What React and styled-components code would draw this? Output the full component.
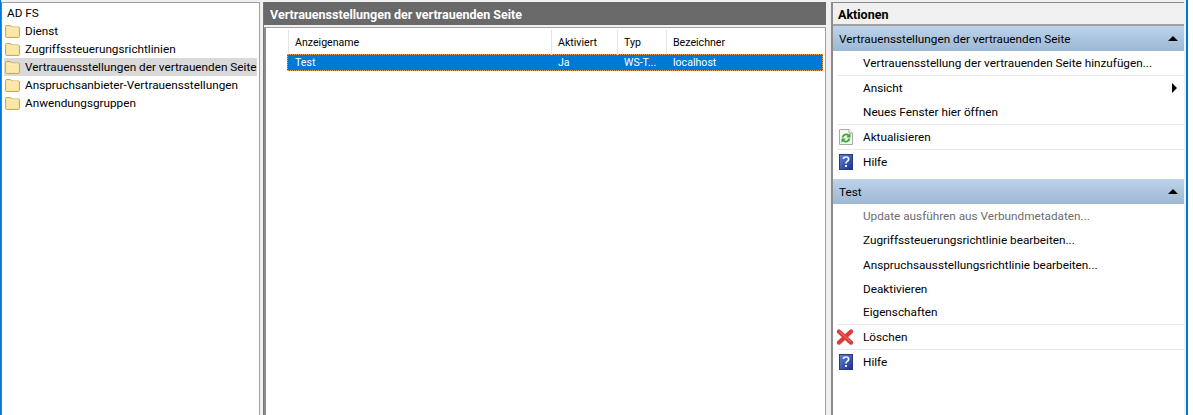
import React from 'react';
import styled, { createGlobalStyle } from 'styled-components';

const Global = createGlobalStyle`
  html, body { margin: 0; padding: 0; background: #fff; }
  body { font-family: Roboto, "Open Sans", sans-serif; font-size: 11.75px; color: #000; overflow: hidden; }
`;
const Window = styled.div`
  width: 1193px; height: 415px; display: flex; background: #fff; overflow: hidden;
`;
const Frame = styled.div`
  width: 1188px; height: 415px; display: flex; flex: none; box-sizing: border-box;
  padding-top: 2px; background: #f0f0f0; border-left: 1px solid #0078d7; border-right: 2px solid #0078d7;
`;
const Pane = styled.section`
  box-sizing: border-box; height: 413px; flex: none; background: #fff;
  border-top: 2px solid #8a8a8a; border-left: 1px solid #777;
`;
const TreePane = styled(Pane)`
  width: 259px; border-right: 1px solid #a0a0a0; padding: 1px 0 0 1px; border-top-width: 1px;
  border-top-color: #a0a0a0;
`;
const TreeRoot = styled.div`
  height: 18px; line-height: 18px; padding-left: 4px;
`;
const TreeRow = styled.div`
  height: 18px; line-height: 18px; margin-left: 1px; width: 253px; display: flex; align-items: center; gap: 5px;
  padding-left: 1px; box-sizing: border-box; white-space: nowrap;
  background: ${p => (p.$active ? '#d9d9d9' : 'transparent')};
  svg { flex: none; }
`;
const Center = styled(Pane)`
  width: 563px; margin-left: 3px; border: 0; background: #f0f0f0; border-left: 1px solid #777;
  display: flex; flex-direction: column;
`;
const TitleBar = styled.div`
  height: 23px; box-sizing: border-box; padding: 4px 0 0 6px; line-height: 18px; background: #696969; color: #fff;
  font-weight: 700; font-size: 12.5px; flex: none;
`;
const ListBox = styled.div`
  flex: 1; margin-top: 2px; background: #fff; border-left: 2px solid #8c8c8c; border-top: 1px solid #a0a0a0;
  border-right: 1px solid #a0a0a0; padding: 2px 2px 0 22px;
`;
const HeaderRow = styled.div`
  display: grid; grid-template-columns: 263px 66px 49px 1fr; height: 23px;
`;
const HeaderCell = styled.div`
  border-left: 1px solid #e5e5e5; line-height: 25px; padding-left: 6px; font-size: 10.6px;
`;
const DataRow = styled.div`
  display: grid; grid-template-columns: 263px 66px 49px 1fr; height: 17px; margin: 1px 0 0 -1px; background: #0078d7; color: #fff;
  outline: 1px dotted #e8a050; outline-offset: -1px; line-height: 18px; font-size: 10.6px;
`;
const DataCell = styled.div`
  padding-left: 8px; white-space: nowrap; overflow: hidden;
`;
const Actions = styled(Pane)`
  width: 353px; margin-left: 5px; border-left: 2px solid #8c8c8c; border-top: 1px solid #8a8a8a;
  display: flex; flex-direction: column; background: #fff;
`;
const ActionsHead = styled.div`
  height: 21px; box-sizing: content-box; line-height: 24px; background: #f0f0f0; font-weight: 700; padding-left: 5px;
  border-bottom: 2px solid #a0a0a0; flex: none; font-size: 12.5px;
`;
const SectionHead = styled.div`
  height: 25px; display: flex; align-items: center; justify-content: space-between; padding: 0 6px 0 6px; flex: none;
  background: linear-gradient(#bcd3ea, #9db8d4); margin-top: ${p => p.$gap || 0}px;
`;
const Caret = styled.span`
  width: 0; height: 0; border-left: 5px solid transparent; border-right: 5px solid transparent; border-bottom: 5px solid #000;
`;
const Item = styled.div`
  height: ${p => p.$h || 25}px; display: flex; align-items: center; flex: none; box-sizing: border-box; position: relative;
  margin: 0 0 0 5px; padding: 0 0 1px 25px; white-space: nowrap;
  color: ${p => (p.$off ? '#6d6d6d' : '#000')};
  border-bottom: ${p => (p.$line ? '1px solid #e8e8e8' : '0')};
`;
const IconSlot = styled.span`
  position: absolute; left: -1px; top: 4px; width: 18px; height: 18px; display: flex;
`;
const SubArrow = styled.span`
  position: absolute; right: 7px; top: 7px; width: 0; height: 0;
  border-top: 5px solid transparent; border-bottom: 5px solid transparent; border-left: 5px solid #000;
`;

const Folder = () => (
  <svg width="15" height="14" viewBox="0 0 15 14">
    <path d="M.5 2.5 Q.5 1.5 1.5 1.5 H5.5 L7 3 H13.5 Q14.5 3 14.5 4 V12.5 Q14.5 13.5 13.5 13.5 H1.5 Q.5 13.5 .5 12.5 Z" fill="#f8dd8e" stroke="#c9a95a" />
    <path d="M1.5 4.5 H13.5 V12.5 H1.5 Z" fill="#fbe7a8" />
    <path d="M1.5 4 H13.5" stroke="#fff6d2" />
  </svg>
);
const Help = ({ id }) => (
  <svg width="14" height="16" viewBox="0 0 14 16" style={{ marginLeft: 2 }}>
    <defs>
      <linearGradient id={id} x1="0" y1="0" x2="1" y2="1">
        <stop offset="0" stopColor="#5f86d8" />
        <stop offset="1" stopColor="#1c2f8c" />
      </linearGradient>
    </defs>
    <rect x=".5" y=".5" width="13" height="15" fill={`url(#${id})`} stroke="#27397f" />
    <path d="M4.5 5 Q4.5 3 7 3 Q9.7 3 9.7 5.2 Q9.7 6.5 8 7.4 Q7 8 7 9.5" fill="none" stroke="#eef2ff" strokeWidth="1.7" />
    <rect x="6" y="11" width="2" height="2" fill="#eef2ff" />
  </svg>
);
const Refresh = () => (
  <svg width="15" height="16" viewBox="0 0 15 16" style={{ marginLeft: 2 }}>
    <path d="M.5 .5 H10 L13.5 4 V15.5 H.5 Z" fill="#f6f6f2" stroke="#a9a9a0" />
    <path d="M10 .5 V4 H13.5" fill="#fff" stroke="#a9a9a0" />
    <path d="M3.6 8.5 A3.6 3.6 0 0 1 9.6 6.4" fill="none" stroke="#35a835" strokeWidth="1.8" />
    <path d="M10.4 9.5 A3.6 3.6 0 0 1 4.4 11.6" fill="none" stroke="#35a835" strokeWidth="1.8" />
    <path d="M11.5 4 V8.4 H7.2 Z" fill="#35a835" />
    <path d="M2.5 14 V9.6 H6.8 Z" fill="#35a835" />
  </svg>
);
const Cross = () => (
  <svg width="18" height="17" viewBox="0 0 18 17" style={{ marginLeft: -1 }}>
    <path d="M3 3.5 L15 14.5 M15 3.5 L3 14.5" stroke="#b9b9b9" strokeWidth="4" strokeLinecap="round" opacity=".5" />
    <path d="M3 2.5 L15 13.5 M15 2.5 L3 13.5" stroke="#e03838" strokeWidth="4.2" strokeLinecap="round" />
    <path d="M3.5 2.5 L14.5 12.5" stroke="#f27a7a" strokeWidth="1" />
  </svg>
);

const treeRows = ['Dienst', 'Zugriffssteuerungsrichtlinien', 'Vertrauensstellungen der vertrauenden Seite', 'Anspruchsanbieter-Vertrauensstellungen', 'Anwendungsgruppen'];
const columns = ['Anzeigename', 'Aktiviert', 'Typ', 'Bezeichner'];
const cells = ['Test', 'Ja', 'WS-T...', 'localhost'];

export default function App() {
  return (
    <>
      <Global />
      <Window>
        <Frame>
          <TreePane>
            <TreeRoot>AD FS</TreeRoot>
            {treeRows.map((r, i) => (
              <TreeRow key={r} $active={i === 2}><Folder />{r}</TreeRow>
            ))}
          </TreePane>
          <Center>
            <TitleBar>Vertrauensstellungen der vertrauenden Seite</TitleBar>
            <ListBox>
              <HeaderRow>{columns.map(c => <HeaderCell key={c}>{c}</HeaderCell>)}</HeaderRow>
              <DataRow>{cells.map(c => <DataCell key={c}>{c}</DataCell>)}</DataRow>
            </ListBox>
          </Center>
          <Actions>
            <ActionsHead>Aktionen</ActionsHead>
            <SectionHead><span>Vertrauensstellungen der vertrauenden Seite</span><Caret /></SectionHead>
            <Item $line>Vertrauensstellung der vertrauenden Seite hinzufügen...</Item>
            <Item>Ansicht<SubArrow /></Item>
            <Item $line $h={24}>Neues Fenster hier öffnen</Item>
            <Item $line><IconSlot><Refresh /></IconSlot>Aktualisieren</Item>
            <Item><IconSlot><Help id="help-a" /></IconSlot>Hilfe</Item>
            <SectionHead $gap={4}><span>Test</span><Caret /></SectionHead>
            <Item $off $h={24}>Update ausführen aus Verbundmetadaten...</Item>
            <Item $h={25}>Zugriffssteuerungsrichtlinie bearbeiten...</Item>
            <Item $h={24}>Anspruchsausstellungsrichtlinie bearbeiten...</Item>
            <Item $h={24}>Deaktivieren</Item>
            <Item $line $h={24}>Eigenschaften</Item>
            <Item $line><IconSlot><Cross /></IconSlot>Löschen</Item>
            <Item><IconSlot><Help id="help-b" /></IconSlot>Hilfe</Item>
          </Actions>
        </Frame>
      </Window>
    </>
  );
}
